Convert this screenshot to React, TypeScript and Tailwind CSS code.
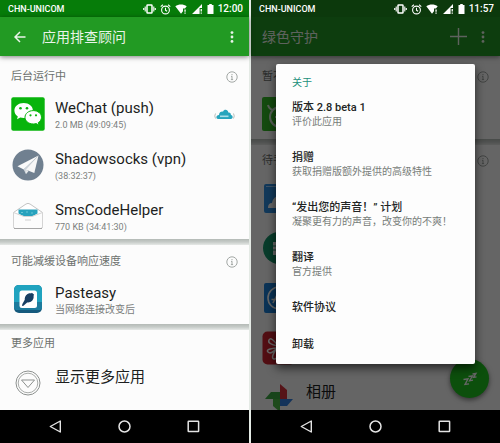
import type { ReactNode } from 'react'

function VibrateIcon() {
  return (
    <svg width="13" height="10" viewBox="0 0 13 10" fill="none" stroke="currentColor">
      <rect x="4" y="1" width="5" height="8" rx="0.6" strokeWidth="1.5" />
      <path d="M2.2 2.5v5M10.8 2.5v5M0.7 4v2M12.3 4v2" strokeWidth="1.1" />
    </svg>
  )
}

function AlarmIcon() {
  return (
    <svg width="11" height="11" viewBox="0 0 11 11" fill="none" stroke="currentColor" strokeWidth="1.1">
      <circle cx="5.5" cy="6" r="3.9" />
      <path d="M5.5 3.8v2.5l1.6 1M0.7 2.6 2.9 0.8M10.3 2.6 8.1 0.8" />
    </svg>
  )
}

function WifiIcon() {
  return (
    <svg width="13" height="10" viewBox="0 0 13 10" fill="currentColor">
      <path d="M0.3 2.2C3.5 0 8.5 0 11.7 2.2L10 4.6H8v2.7L6 9.8z" />
      <path d="M9.4 5.4h1.3v2.4H9.4zM9.4 8.6h1.3v1.2H9.4z" />
    </svg>
  )
}

function SignalIcon() {
  return (
    <svg width="11" height="10" viewBox="0 0 11 10" fill="currentColor">
      <path d="M10 0v4H7.6v6H0z" />
      <path d="M8.6 5h1.3v2.6H8.6zM8.6 8.5h1.3v1.3H8.6z" />
    </svg>
  )
}

function BatteryIcon() {
  return (
    <svg width="7" height="10" viewBox="0 0 7 10" fill="currentColor">
      <path d="M2.2 0h2.6v1H6.5v9h-6V1h1.7z" />
    </svg>
  )
}

function StatusBar({ time, className }: { time: string; className: string }) {
  return (
    <div className={`flex h-[17px] shrink-0 items-center justify-between pl-2 pr-1.5 pt-px text-white ${className}`}>
      <span className="text-[9px] font-medium leading-4">CHN-UNICOM</span>
      <div className="flex items-center">
        <div className="flex items-center gap-1 pr-1">
          <VibrateIcon />
          <AlarmIcon />
          <WifiIcon />
          <SignalIcon />
          <BatteryIcon />
        </div>
        <span className="text-[10px] font-medium leading-4">{time}</span>
      </div>
    </div>
  )
}

function MoreButton() {
  return (
    <button type="button" aria-label="更多选项" className="flex h-5 w-3 items-center justify-center">
      <svg width="4" height="12" viewBox="0 0 4 12" fill="currentColor">
        <circle cx="2" cy="1.6" r="1.4" />
        <circle cx="2" cy="6" r="1.4" />
        <circle cx="2" cy="10.4" r="1.4" />
      </svg>
    </button>
  )
}

function InfoButton() {
  return (
    <button type="button" aria-label="说明" className="text-[#a3a8a5]">
      <svg width="12" height="12" viewBox="0 0 12 12" fill="none" stroke="currentColor">
        <circle cx="6" cy="6" r="5.2" />
        <path d="M6 5.2v3.6M6 3v1.2M5 5.4h1M4.900 8.600h2.200" />
      </svg>
    </button>
  )
}

function NavBar() {
  return (
    <nav className="flex h-[33px] shrink-0 items-center justify-between bg-black px-[49px] text-[#e4e4e4]">
      <button type="button" aria-label="返回">
        <svg width="13" height="13" viewBox="0 0 13 13" fill="none" stroke="currentColor" strokeWidth="1.4" strokeLinejoin="round">
          <path d="M11.3 1v11L1.3 6.5z" />
        </svg>
      </button>
      <button type="button" aria-label="主屏幕">
        <svg width="13" height="13" viewBox="0 0 13 13" fill="none" stroke="currentColor" strokeWidth="1.5">
          <circle cx="6.5" cy="6.5" r="5.5" />
        </svg>
      </button>
      <button type="button" aria-label="最近任务">
        <svg width="13" height="13" viewBox="0 0 13 13" fill="none" stroke="currentColor" strokeWidth="1.5">
          <rect x="1.2" y="1.2" width="10.4" height="10.4" rx="0.5" />
        </svg>
      </button>
    </nav>
  )
}

function Divider() {
  return <div className="h-1.5 shrink-0 bg-linear-to-b from-[#b4bab6] via-[#c6cbc8] to-[#e6e9e7]" />
}

function SectionHeader({ title, info }: { title: string; info?: boolean }) {
  return (
    <div className="flex h-[26px] items-center justify-between px-[11px] pt-0.5">
      <h2 className="text-[11px] leading-4 text-[#6c716e]">{title}</h2>
      {info && <InfoButton />}
    </div>
  )
}

function AppRow({ icon, title, detail, badge }: { icon: ReactNode; title?: string; detail?: string; badge?: ReactNode }) {
  return (
    <li className="flex h-[34px] items-center pl-[11px] pr-3.5">
      <div className="flex w-[34px] shrink-0 justify-center">{icon}</div>
      <div className="h-full min-w-0 flex-1 pl-2.5">
        {title && <p className="text-[15px] leading-[22px] text-[#1d1f1e]">{title}</p>}
        {detail && <p className="text-[9px] leading-3 text-[#7b807d]">{detail}</p>}
      </div>
      {badge}
    </li>
  )
}

function WeChatIcon() {
  return (
    <svg width="34" height="34" viewBox="0 0 34 34">
      <rect x="0.3" y="0.3" width="33.4" height="33.4" rx="2" fill="#08b40c" />
      <path d="M12.7 6C7.4 6 3.4 9.3 3.4 13.5c0 2.5 1.3 4.6 3.4 5.9L6 22.3l3.3-1.8c1.1.3 2.2.5 3.4.5 5.2 0 9.2-3.3 9.2-7.5S17.9 6 12.7 6z" fill="#fff" />
      <path d="M22.3 13.6c-4.8 0-8.3 3-8.3 6.7s3.5 6.7 8.3 6.7c1 0 2-.2 2.9-.4l2.9 1.6-.8-2.6c1.9-1.2 3.2-3.1 3.2-5.3 0-3.7-3.5-6.7-8.2-6.7z" fill="#fff" stroke="#08b40c" strokeWidth="1" />
      <circle cx="9.5" cy="11.3" r="1.3" fill="#08b40c" />
      <circle cx="16" cy="11.3" r="1.3" fill="#08b40c" />
      <circle cx="19.5" cy="18.3" r="1.1" fill="#08b40c" />
      <circle cx="25" cy="18.3" r="1.1" fill="#08b40c" />
    </svg>
  )
}

function PlaneIcon() {
  return (
    <svg width="32" height="32" viewBox="0 0 32 32">
      <circle cx="16" cy="16" r="15.5" fill="#708090" />
      <path d="M26.5 6.5 5.5 17.2l6.2 3.2z" fill="#fafafa" />
      <path d="M26.5 6.5 11.7 20.4l2.200 4.600 1.600-3z" fill="#cfd5da" />
      <path d="M26.5 6.5 14 20.8l8.3 3.2z" fill="#f6f6f6" />
      <path d="m13.5 21 3 1.3-2.5 2.600z" fill="#e5e8ea" />
    </svg>
  )
}

function EnvelopeIcon() {
  return (
    <svg width="32" height="28" viewBox="0 0 32 28">
      <path d="M1.5 10.5 14 2q2-1.3 4 0l12.5 8.5v14q0 2-2 2h-25q-2 0-2-2z" fill="#fff" stroke="#c4c4c4" />
      <path d="M6.5 7.500h19v4l-4.500 2.500h-10l-4.500-2.500z" fill="#28a2bd" />
      <path d="M9 10.500h2m3-.5h2m3 1h2" stroke="#69c5d5" strokeWidth="1" />
      <path d="M1.5 10.500 12 14.500h8l10.500-4v14q0 2-2 2h-25q-2 0-2-2z" fill="#fcfcfc" stroke="#d4d4d4" />
      <path d="M2 26.5h28" stroke="#a6a6a6" />
      <path d="M13 18h6" stroke="#d0d0d0" />
    </svg>
  )
}

function PasteasyIcon() {
  return (
    <svg width="28" height="28" viewBox="0 0 28 28">
      <rect width="28" height="28" rx="5" fill="#155a7d" />
      <path d="M5 0h18q5 0 5 5v17q0 3-5 3H5q-5 0-5-3V5q0-5 5-5z" fill="#20a3bf" />
      <path d="M0 17h28v5q0 3-5 3H5q-5 0-5-3z" fill="#1c7b9d" />
      <rect x="5.5" y="5.5" width="17.5" height="17.5" rx="2.5" fill="#fff" />
      <ellipse cx="15.2" cy="12.8" rx="4.1" ry="5" transform="rotate(40 15.2 12.8)" fill="#183f63" />
      <path d="m11.5 13.5 3 2.800-5 4.500-1.500.2.400-2z" fill="#183f63" />
      <path d="m17.2 8.500 2.300 2" stroke="#183f63" strokeWidth="2" />
    </svg>
  )
}

function ShowMoreIcon() {
  return (
    <svg width="26" height="26" viewBox="0 0 26 26" fill="none" stroke="#8d918f">
      <circle cx="13" cy="13" r="12" />
      <circle cx="13" cy="13" r="9.8" stroke="#a9acaa" />
      <path d="M6.5 10h13L13 17.5z" strokeLinejoin="round" />
    </svg>
  )
}

function CloudBadge() {
  return (
    <svg width="21" height="11" viewBox="0 0 21 11">
      <path d="M4 10C1.5 10 1.9 6 5 6c0-3 3-4 4-3.2C10-.2 14 .3 14.3 3.5c2-.3 2.7 1 2.6 2.5C19.5 6.5 19 10 17 10z" fill="#27a5bd" />
      <path d="M1.5 4.5Q0 7 1.5 9.5M19.5 4.5Q21 7 19.5 9.5" fill="none" stroke="#b9bebb" />
      <path d="M6 7.300h8.500" stroke="#a9dde7" strokeWidth="1.600" />
    </svg>
  )
}

function ClockTileIcon() {
  return (
    <svg width="34" height="34" viewBox="0 0 34 34" fill="none" stroke="#d8ead8" strokeWidth="2">
      <rect width="34" height="34" rx="2" fill="#33b927" stroke="none" />
      <circle cx="18" cy="20" r="10" />
      <path d="M6 8q1 4 5 5M30 8q-1 4-5 5M18 14v6h-5" />
    </svg>
  )
}

function CloudTileIcon() {
  return (
    <svg width="30" height="29" viewBox="0 0 30 29">
      <rect width="30" height="29" rx="2" fill="#2f8fe0" />
      <path d="M2 2.5h26" stroke="#9fd0ff" />
      <path d="M4 24q0-5 4-5 1-7 8-7t8 7q4 0 4 5z" fill="#fff" />
    </svg>
  )
}

function SheetIcon() {
  return (
    <svg width="32" height="32" viewBox="0 0 32 32">
      <circle cx="16" cy="16" r="16" fill="#16966b" />
      <path d="M10 10h12v13H10z" fill="#fff" />
      <path d="M10 14h12M10 18h12M15 10v13" stroke="#16966b" />
    </svg>
  )
}

function StoreIcon() {
  return (
    <svg width="30" height="30" viewBox="0 0 30 30" fill="none" stroke="#fff" strokeWidth="1.6">
      <rect width="30" height="30" rx="2" fill="#1c80d8" stroke="none" />
      <circle cx="15" cy="15" r="11" />
      <path d="m9 20 6-12 6 12M7.5 16.5h15" />
    </svg>
  )
}

function FlowerIcon() {
  return (
    <svg width="34" height="34" viewBox="0 0 34 34" fill="none" stroke="#fff" strokeWidth="1.5">
      <rect x="0.5" y="0.5" width="33" height="33" rx="5" fill="#cc2530" stroke="none" />
      <path d="M16 15Q5 13 7 9t9 6Q14 5 18 6t-2 9M15 17Q3 18 6 21t9-4Q8 27 12 28t4-10q2 12 6 9t-5-10" />
    </svg>
  )
}

function PinwheelIcon() {
  return (
    <svg width="30" height="30" viewBox="0 0 30 30">
      <path d="M16 1 23 7v9h-7z" fill="#d8333c" />
      <path d="M1 16 7 9h9v7z" fill="#3caa45" />
      <path d="M29 16l-6 7h-7v-7z" fill="#3380e0" />
      <path d="M16 29l-7-6v-7h7z" fill="#4db845" />
    </svg>
  )
}

function AdvisorPhone() {
  return (
    <div className="flex min-w-0 flex-1 flex-col bg-[#fcfcfc]">
      <StatusBar time="12:00" className="bg-[#067c09]" />
      <header className="z-10 flex h-[39px] shrink-0 items-center bg-[#229a23] pl-3.5 pr-[11px] text-[#eaf4ea] shadow-[0_1px_5px_#00000080]">
        <button type="button" aria-label="返回">
          <svg width="12" height="12" viewBox="0 0 12 12" fill="none" stroke="currentColor" strokeWidth="1.5">
            <path d="M11.5 6H1.3M6 1 1 6l5 5" />
          </svg>
        </button>
        <h1 className="flex-1 pl-4 text-sm leading-5">应用排查顾问</h1>
        <MoreButton />
      </header>
      <main className="min-h-0 flex-1 overflow-hidden">
        <section className="pb-1.5 pt-[7px]">
          <SectionHeader title="后台运行中" info />
          <ul className="flex flex-col gap-[17px] pt-2">
            <AppRow icon={<WeChatIcon />} title="WeChat (push)" detail="2.0 MB (49:09:45)" badge={<CloudBadge />} />
            <AppRow icon={<PlaneIcon />} title="Shadowsocks (vpn)" detail="(38:32:37)" />
            <AppRow icon={<EnvelopeIcon />} title="SmsCodeHelper" detail="770 KB (34:41:30)" />
          </ul>
        </section>
        <Divider />
        <section className="pb-2 pt-[3px]">
          <SectionHeader title="可能减缓设备响应速度" info />
          <ul className="pt-2">
            <li className="flex h-[34px] items-center pl-[11px]">
              <div className="flex w-[34px] shrink-0 justify-center">
                <PasteasyIcon />
              </div>
              <div className="pl-2.5">
                <p className="text-[15px] leading-[22px] text-[#1d1f1e]">Pasteasy</p>
                <p className="text-[10px] leading-3 text-[#7b807d]">当网络连接改变后</p>
              </div>
            </li>
          </ul>
        </section>
        <Divider />
        <section>
          <SectionHeader title="更多应用" />
          <button type="button" className="flex w-full items-center pl-[11px] pt-2.5 text-left">
            <span className="flex h-[34px] w-[34px] shrink-0 items-center justify-center">
              <ShowMoreIcon />
            </span>
            <span className="h-[34px] pl-2.5 text-[15px] leading-[22px] text-[#1d1f1e]">显示更多应用</span>
          </button>
        </section>
      </main>
      <NavBar />
    </div>
  )
}

const aboutItems = [
  { title: '版本 2.8 beta 1', detail: '评价此应用' },
  { title: '捐赠', detail: '获取捐赠版额外提供的高级特性' },
  { title: '“发出您的声音！” 计划', detail: '凝聚更有力的声音，改变你的不爽！' },
  { title: '翻译', detail: '官方提供' },
  { title: '软件协议' },
  { title: '卸载' },
]

function AboutDialog() {
  return (
    <div role="dialog" aria-labelledby="about-title" className="w-full rounded-xs bg-[#fdfdfd] shadow-[0_4px_10px_#000000a0]">
      <h2 id="about-title" className="px-4 pt-3 text-[10px] leading-[14px] text-[#23917c]">
        关于
      </h2>
      {aboutItems.map((item) => (
        <button
          key={item.title}
          type="button"
          className={`block w-full whitespace-nowrap px-4 text-left ${item.detail ? 'pb-[11px] pt-[11px]' : 'h-[37px]'}`}
        >
          <span className="block text-[11px] font-medium leading-[14px] text-[#222423]">{item.title}</span>
          {item.detail && <span className="block text-[10px] leading-[14px] text-[#777c79]">{item.detail}</span>}
        </button>
      ))}
    </div>
  )
}

function GreenifyPhone() {
  return (
    <div className="flex min-w-0 flex-1 flex-col bg-[#fcfcfc]">
      <StatusBar time="11:57" className="bg-[#0c390c]" />
      <div className="relative flex min-h-0 flex-1 flex-col overflow-hidden">
        <header className="flex h-[39px] shrink-0 items-center bg-[#229a23] px-[11px] text-[#eaf4ea] shadow-[0_1px_5px_#00000080]">
          <h1 className="flex-1 text-sm leading-5">绿色守护</h1>
          <button type="button" aria-label="添加" className="mr-2.5">
            <svg width="17" height="17" viewBox="0 0 17 17" fill="none" stroke="currentColor" strokeWidth="1.4">
              <path d="M8.5 0v17M0 8.5h17" />
            </svg>
          </button>
          <MoreButton />
        </header>
        <main className="min-h-0 flex-1 overflow-hidden">
          <section className="pb-2 pt-[7px]">
            <SectionHeader title="暂不" info />
            <ul className="pt-2">
              <AppRow icon={<ClockTileIcon />} />
            </ul>
          </section>
          <Divider />
          <section className="pt-0.5">
            <SectionHeader title="待手" info />
            <ul className="flex flex-col gap-4 pt-2">
              <AppRow icon={<CloudTileIcon />} />
              <AppRow icon={<SheetIcon />} />
              <AppRow icon={<StoreIcon />} />
              <AppRow icon={<FlowerIcon />} />
              <AppRow icon={<PinwheelIcon />} title="相册" />
            </ul>
          </section>
        </main>
        <button
          type="button"
          aria-label="休眠"
          className="absolute bottom-3 right-[11px] flex size-[39px] items-center justify-center rounded-full bg-[#1fc61f] text-white shadow-[0_2px_5px_#00000080]"
        >
          <svg width="16" height="14" viewBox="0 0 16 14" fill="none" stroke="currentColor" strokeWidth="1.3">
            <path d="M1.5 7.5 6 6.8 3 12.5l4-.7M6.5 4.5l4-.7-3 5 3.5-.6M10.500 2l3.500-.6-2.500 4 3-.5" />
          </svg>
        </button>
        <div className="absolute inset-0 flex items-center bg-black/60 px-[25px]">
          <AboutDialog />
        </div>
      </div>
      <NavBar />
    </div>
  )
}

export default function App() {
  return (
    <div className="flex h-screen gap-0.5 overflow-hidden bg-[#e4eae5] font-['Roboto','Noto_Sans_CJK_SC',sans-serif]">
      <AdvisorPhone />
      <GreenifyPhone />
    </div>
  )
}
